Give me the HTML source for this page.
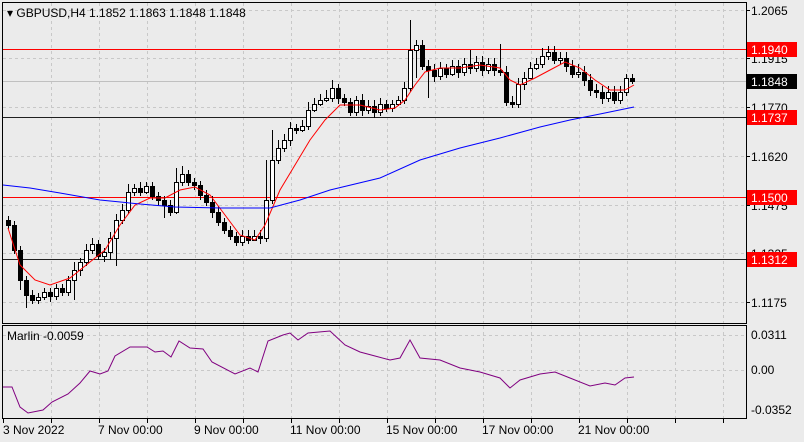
<!DOCTYPE html>
<html><head><meta charset="utf-8"><style>
body{margin:0;width:804px;height:442px;background:#ebebeb;overflow:hidden;font-family:"Liberation Sans",sans-serif}
svg{position:absolute;left:0;top:0}
</style></head><body>
<svg width="804" height="442" xmlns="http://www.w3.org/2000/svg" font-family="Liberation Sans, sans-serif" font-size="12">
<rect x="0" y="0" width="804" height="442" fill="#ebebeb"/>
<path fill="none" stroke="#c8c8c8" stroke-dasharray="3,3" stroke-width="1" d="M51.5 3V323M99.5 3V323M147.5 3V323M195.5 3V323M243.5 3V323M291.5 3V323M339.5 3V323M387.5 3V323M435.5 3V323M483.5 3V323M531.5 3V323M579.5 3V323M627.5 3V323M675.5 3V323M723.5 3V323M51.5 326V418M99.5 326V418M147.5 326V418M195.5 326V418M243.5 326V418M291.5 326V418M339.5 326V418M387.5 326V418M435.5 326V418M483.5 326V418M531.5 326V418M579.5 326V418M627.5 326V418M675.5 326V418M723.5 326V418M3 10.5H746M3 58.5H746M3 107.5H746M3 156.5H746M3 205.5H746M3 253.5H746M3 302.5H746M3 335.5H746M3 370.5H746"/>
<rect x="3" y="81" width="743" height="1" fill="#c0c0c0"/>
<rect x="3" y="49" width="743" height="1" fill="#ff0000"/>
<rect x="3" y="197" width="743" height="1" fill="#ff0000"/>
<rect x="3" y="117" width="743" height="1" fill="#202020"/>
<rect x="3" y="259" width="743" height="1" fill="#202020"/>
<path fill="none" stroke="#000" stroke-width="1" d="M8.5 216V229M14.5 221V254M20.5 246V290M26.5 276V308M32.5 290V304M38.5 293V304M44.5 288V300M50.5 288V302M56.5 284V300M62.5 284V296M68.5 276V296M74.5 262V300M80.5 258V276M86.5 244V266M92.5 238V254M98.5 240V260M104.5 248V262M110.5 232V260M116.5 214V266M122.5 204V224M128.5 184V214M134.5 184V196M140.5 182V196M146.5 182V194M152.5 182V200M158.5 192V206M164.5 196V218M170.5 200V216M176.5 168V214M182.5 166V186M188.5 170V186M194.5 178V190M200.5 181V200M206.5 190V206M212.5 196V218M218.5 206V226M224.5 218V234M230.5 226V240M236.5 232V246M242.5 230V246M248.5 230V244M254.5 230V240M260.5 230V244M266.5 160V242M272.5 130V204M278.5 140V164M284.5 134V152M290.5 122V146M296.5 124V134M302.5 120V132M308.5 102V130M314.5 98V112M320.5 94V106M326.5 90V102M332.5 80V102M338.5 84V104M344.5 94V106M350.5 98V116M356.5 96V116M362.5 94V116M368.5 100V114M374.5 100V118M380.5 98V116M386.5 100V112M392.5 100V112M398.5 96V106M404.5 82V104M410.5 20V92M416.5 40V78M422.5 40V70M428.5 60V98M434.5 64V82M440.5 62V80M446.5 64V78M452.5 60V76M458.5 60V78M464.5 58V76M470.5 50V74M476.5 56V72M482.5 56V76M488.5 58V74M494.5 58V76M500.5 44V76M506.5 66V106M512.5 96V108M518.5 78V108M524.5 72V90M530.5 62V76M536.5 58V70M542.5 48V68M548.5 46V60M554.5 46V64M560.5 52V64M566.5 52V72M572.5 60V78M578.5 64V78M584.5 66V86M590.5 74V96M596.5 84V98M602.5 86V104M608.5 86V102M614.5 86V104M620.5 86V104M626.5 74V96M632.5 74V84"/>
<path fill="#000" stroke="#000" stroke-width="1" d="M6.5 220.5h4v5h-4zM12.5 225.5h4v25h-4zM18.5 250.5h4v30h-4zM24.5 280.5h4v15h-4zM30.5 295.5h4v5h-4zM48.5 292.5h4v4h-4zM60.5 288.5h4v4h-4zM96.5 244.5h4v12h-4zM138.5 188.5h4v4h-4zM150.5 186.5h4v10h-4zM156.5 196.5h4v4h-4zM162.5 200.5h4v5h-4zM168.5 205.5h4v7h-4zM186.5 174.5h4v8h-4zM192.5 182.5h4v3h-4zM198.5 185.5h4v10h-4zM204.5 195.5h4v7h-4zM210.5 202.5h4v10h-4zM216.5 212.5h4v10h-4zM222.5 222.5h4v8h-4zM228.5 230.5h4v6h-4zM234.5 236.5h4v6h-4zM246.5 236.5h4v4h-4zM258.5 236.5h4v2h-4zM294.5 128.5h4v2h-4zM336.5 88.5h4v10h-4zM342.5 98.5h4v4h-4zM348.5 102.5h4v10h-4zM360.5 100.5h4v10h-4zM372.5 106.5h4v6h-4zM384.5 104.5h4v4h-4zM420.5 45.5h4v21h-4zM426.5 66.5h4v4h-4zM432.5 70.5h4v6h-4zM444.5 68.5h4v6h-4zM456.5 66.5h4v6h-4zM468.5 64.5h4v4h-4zM480.5 62.5h4v8h-4zM492.5 64.5h4v6h-4zM498.5 70.5h4v2h-4zM504.5 72.5h4v30h-4zM510.5 102.5h4v2h-4zM552.5 52.5h4v8h-4zM564.5 58.5h4v8h-4zM570.5 66.5h4v8h-4zM582.5 72.5h4v8h-4zM588.5 80.5h4v10h-4zM594.5 90.5h4v2h-4zM600.5 92.5h4v6h-4zM612.5 92.5h4v8h-4zM630.5 78.5h4v3h-4z"/>
<path fill="#fff" stroke="#000" stroke-width="1" d="M36.5 297.5h4v3h-4zM42.5 292.5h4v5h-4zM54.5 288.5h4v8h-4zM66.5 280.5h4v12h-4zM72.5 270.5h4v10h-4zM78.5 262.5h4v8h-4zM84.5 250.5h4v12h-4zM90.5 244.5h4v6h-4zM102.5 252.5h4v4h-4zM108.5 238.5h4v14h-4zM114.5 220.5h4v18h-4zM120.5 210.5h4v10h-4zM126.5 192.5h4v18h-4zM132.5 188.5h4v4h-4zM144.5 186.5h4v6h-4zM174.5 182.5h4v30h-4zM180.5 174.5h4v8h-4zM240.5 236.5h4v6h-4zM252.5 236.5h4v4h-4zM264.5 200.5h4v38h-4zM270.5 160.5h4v40h-4zM276.5 148.5h4v12h-4zM282.5 140.5h4v8h-4zM288.5 128.5h4v12h-4zM300.5 126.5h4v4h-4zM306.5 110.5h4v16h-4zM312.5 104.5h4v6h-4zM318.5 100.5h4v4h-4zM324.5 98.5h4v2h-4zM330.5 88.5h4v10h-4zM354.5 100.5h4v12h-4zM366.5 106.5h4v4h-4zM378.5 104.5h4v8h-4zM390.5 104.5h4v4h-4zM396.5 100.5h4v4h-4zM402.5 88.5h4v12h-4zM408.5 50.5h4v38h-4zM414.5 45.5h4v5h-4zM438.5 68.5h4v8h-4zM450.5 66.5h4v8h-4zM462.5 64.5h4v8h-4zM474.5 62.5h4v6h-4zM486.5 64.5h4v6h-4zM516.5 84.5h4v20h-4zM522.5 78.5h4v6h-4zM528.5 68.5h4v10h-4zM534.5 64.5h4v4h-4zM540.5 56.5h4v8h-4zM546.5 52.5h4v4h-4zM558.5 58.5h4v2h-4zM576.5 72.5h4v2h-4zM606.5 92.5h4v6h-4zM618.5 92.5h4v8h-4zM624.5 78.5h4v14h-4z"/>
<polyline fill="none" stroke="#ff0000" stroke-width="1" points="8,228 20,265 35,280 50,285 70,278 90,262 105,250 120,225 135,205 150,198 165,198 180,190 195,187 210,195 225,215 240,235 255,240 265,225 280,190 295,165 310,140 325,120 340,105 360,105 380,110 395,108 405,100 415,85 425,72 440,68 460,68 480,65 500,68 510,80 520,85 535,78 550,70 565,62 580,68 595,80 610,90 625,90 634,85"/>
<polyline fill="none" stroke="#0000ff" stroke-width="1" points="3,185 30,188 60,193 100,200 140,204 175,207 220,208 270,208 300,200 330,190 380,178 420,160 460,148 500,138 540,127 570,120 600,114 634,107"/>
<polyline fill="none" stroke="#800080" stroke-width="1" points="3,387 12,387 20,407 28,413 43,410 52,402 68,394 80,383 90,371 100,374 108,371 115,356 130,347 147,347 155,352 163,351 171,357 179,341 190,348 203,349 212,362 235,374 250,368 258,372 268,341 283,335 290,333 298,340 308,333 330,331 345,345 360,352 375,356 390,360 400,358 410,340 420,358 440,360 460,368 480,372 500,378 510,388 520,380 540,374 555,372 570,378 590,386 605,383 615,385 625,378 634,377"/>
<rect x="2.5" y="2.5" width="744" height="321" fill="none" stroke="#000" stroke-width="1"/>
<rect x="2.5" y="325.5" width="744" height="93" fill="none" stroke="#000" stroke-width="1"/>
<path fill="none" stroke="#000" stroke-width="1" d="M3.5 419V423M51.5 419V423M99.5 419V423M147.5 419V423M195.5 419V423M243.5 419V423M291.5 419V423M339.5 419V423M387.5 419V423M435.5 419V423M483.5 419V423M531.5 419V423M579.5 419V423M627.5 419V423M675.5 419V423M723.5 419V423M747 10.5H750M747 58.5H750M747 107.5H750M747 156.5H750M747 205.5H750M747 253.5H750M747 302.5H750"/>
<text x="7" y="17" font-size="12" fill="#000">▾ GBPUSD,H4  1.1852 1.1863 1.1848 1.1848</text>
<text x="7" y="340" font-size="12" fill="#000">Marlin -0.0059</text>
<text x="751" y="15" fill="#000">1.2065</text><text x="751" y="63" fill="#000">1.1915</text>
<text x="751" y="112" fill="#000">1.1770</text><text x="751" y="161" fill="#000">1.1620</text>
<text x="751" y="210" fill="#000">1.1475</text><text x="751" y="258" fill="#000">1.1325</text>
<text x="751" y="307" fill="#000">1.1175</text>
<text x="751" y="339" fill="#000">0.0311</text><text x="751" y="374" fill="#000">0.00</text><text x="751" y="414" fill="#000">-0.0352</text>
<rect x="747" y="42" width="50" height="15" fill="#ff0000"/><text x="751" y="54" fill="#fff">1.1940</text>
<rect x="747" y="74" width="50" height="15" fill="#000"/><text x="751" y="86" fill="#fff">1.1848</text>
<rect x="747" y="110" width="50" height="15" fill="#ff0000"/><text x="751" y="122" fill="#fff">1.1737</text>
<rect x="747" y="190" width="50" height="15" fill="#ff0000"/><text x="751" y="202" fill="#fff">1.1500</text>
<rect x="747" y="252" width="50" height="15" fill="#ff0000"/><text x="751" y="264" fill="#fff">1.1312</text>
<text x="3" y="434" fill="#000">3 Nov 2022</text><text x="98" y="434" fill="#000">7 Nov 00:00</text><text x="194" y="434" fill="#000">9 Nov 00:00</text><text x="290" y="434" fill="#000">11 Nov 00:00</text><text x="386" y="434" fill="#000">15 Nov 00:00</text><text x="482" y="434" fill="#000">17 Nov 00:00</text><text x="578" y="434" fill="#000">21 Nov 00:00</text>
</svg>
</body></html>
